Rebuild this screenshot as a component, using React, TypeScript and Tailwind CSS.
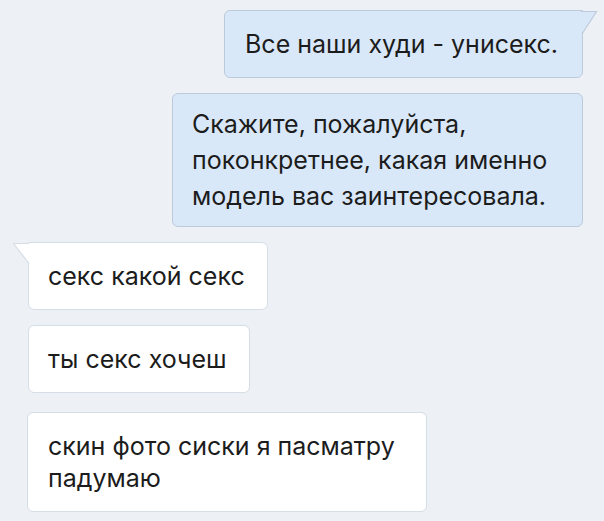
import React from "react";

const font = { fontFamily: "Inter, 'Noto Sans', sans-serif" };

function RightTail() {
  return (
    <svg
      className="absolute top-0 left-[calc(100%-1px)]"
      width="17"
      height="25"
      viewBox="0 0 17 25"
    >
      <polygon points="0,0.5 15.5,0.5 0,23.5" fill="#d9e8f8" />
      <polyline points="0,0.5 15.5,0.5 1,23" fill="none" stroke="#bccadb" strokeWidth="1.2" />
    </svg>
  );
}

function LeftTail() {
  return (
    <svg
      className="absolute top-0 right-[calc(100%-1px)]"
      width="17"
      height="22"
      viewBox="0 0 17 22"
    >
      <polygon points="17,0.5 0.5,0.5 17,21" fill="#ffffff" />
      <polyline points="16,0.5 0.5,0.5 16,20.5" fill="none" stroke="#d5dde6" strokeWidth="1.2" />
    </svg>
  );
}

export default function App() {
  return (
    <div
      className="w-[604px] h-[521px] bg-[#edf1f5] flex flex-col overflow-hidden text-[#1c1c1c] text-[25px]"
      style={font}
    >
      <div className="self-end mr-[21px] mt-[10px] relative w-[359px] h-[68px] bg-[#d9e8f8] border border-[#bccadb] rounded-[6px] rounded-tr-none pl-[20px] flex items-center leading-[36px] whitespace-nowrap">
        Все наши худи - унисекс.
        <RightTail />
      </div>

      <div className="self-end mr-[21px] mt-[15px] w-[411px] h-[134px] bg-[#d9e8f8] border border-[#bccadb] rounded-[6px] pl-[19px] pt-[12px] leading-[36px] whitespace-nowrap">
        <div>Скажите, пожалуйста,</div>
        <div>поконкретнее, какая именно</div>
        <div>модель вас заинтересовала.</div>
      </div>

      <div className="ml-[28px] mt-[15px] relative w-[240px] h-[68px] bg-white border border-[#d5dde6] rounded-[6px] rounded-tl-none pl-[19px] flex items-center leading-[36px] whitespace-nowrap">
        секс какой секс
        <LeftTail />
      </div>

      <div className="ml-[28px] mt-[15px] w-[222px] h-[68px] bg-white border border-[#d5dde6] rounded-[6px] pl-[19px] flex items-center leading-[36px] whitespace-nowrap">
        ты секс хочеш
      </div>

      <div className="ml-[27px] mt-[19px] w-[400px] h-[100px] bg-white border border-[#d5dde6] rounded-[6px] pl-[20px] pt-[17px] leading-[32px] whitespace-nowrap">
        <div>скин фото сиски я пасматру</div>
        <div>падумаю</div>
      </div>
    </div>
  );
}
